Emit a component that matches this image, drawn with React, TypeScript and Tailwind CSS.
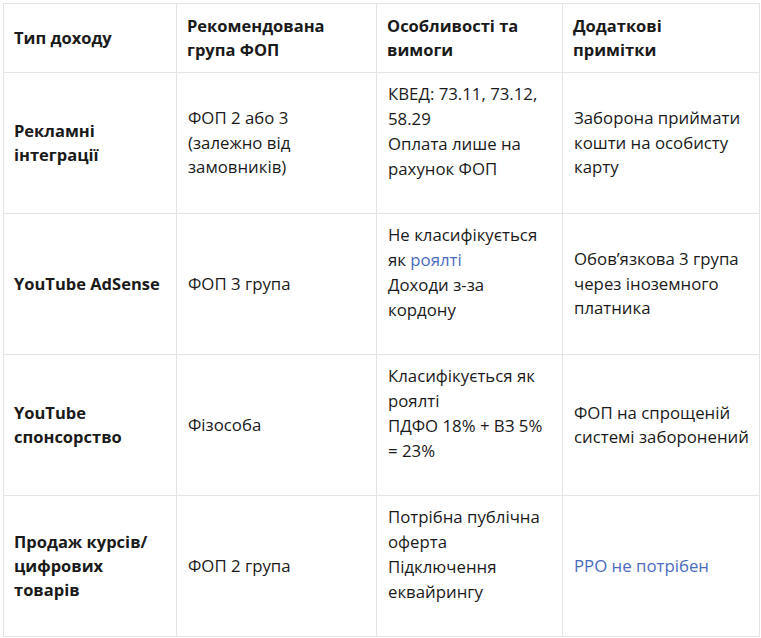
import React from 'react';

type Row = {
  type: string;
  group: string;
  features: React.ReactNode;
  notes: React.ReactNode;
};

const link = 'text-[#4a6cc0]';

const rows: Row[] = [
  {
    type: 'Рекламні інтеграції',
    group: 'ФОП 2 або 3 (залежно від замовників)',
    features: (
      <>
        КВЕД: 73.11, 73.12, 58.29
        <br />
        Оплата лише на рахунок ФОП
      </>
    ),
    notes: 'Заборона приймати кошти на особисту карту',
  },
  {
    type: 'YouTube AdSense',
    group: 'ФОП 3 група',
    features: (
      <>
        Не класифікується як <span className={link}>роялті</span>
        <br />
        Доходи з-за кордону
      </>
    ),
    notes: 'Обов’язкова 3 група через іноземного платника',
  },
  {
    type: 'YouTube спонсорство',
    group: 'Фізособа',
    features: (
      <>
        Класифікується як роялті
        <br />
        ПДФО 18% + ВЗ 5% = 23%
      </>
    ),
    notes: 'ФОП на спрощеній системі заборонений',
  },
  {
    type: 'Продаж курсів/ цифрових товарів',
    group: 'ФОП 2 група',
    features: (
      <>
        Потрібна публічна оферта
        <br />
        Підключення еквайрингу
      </>
    ),
    notes: <span className={link}>РРО не потрібен</span>,
  },
];

const headers: React.ReactNode[] = [
  'Тип доходу',
  <>Рекомендована<br />група ФОП</>,
  <>Особливості та<br />вимоги</>,
  <>Додаткові<br />примітки</>,
];

const App: React.FC = () => {
  return (
    <div className="bg-white min-h-screen p-[3px] font-['Open_Sans',sans-serif] text-[16.8px] text-[#1a1a1a]">
      <table className="w-[756px] table-fixed border-collapse">
        <colgroup>
          <col className="w-[173px]" />
          <col className="w-[200px]" />
          <col className="w-[186px]" />
          <col className="w-[197px]" />
        </colgroup>
        <thead>
          <tr className="h-[69px]">
            {headers.map((h, i) => (
              <th
                key={i}
                className="border border-[#e4e4e4] px-[10px] py-[10px] text-left align-middle text-[16.5px] font-bold leading-[24px]"
              >
                {h}
              </th>
            ))}
          </tr>
        </thead>
        <tbody>
          {rows.map((r) => (
            <tr key={r.type} className="h-[141px]">
              <td className="border border-[#e4e4e4] px-[10px] py-[6px] align-middle text-[16.5px] font-bold leading-[24px]">
                {r.type}
              </td>
              <td className="border border-[#e4e4e4] px-[11px] py-[6px] align-middle leading-[24.5px]">{r.group}</td>
              <td className="border border-[#e4e4e4] px-[11px] py-[6px] align-middle leading-[25px]">
                <div className="pb-[25px]">{r.features}</div>
              </td>
              <td className="border border-[#e4e4e4] pl-[11px] pr-[6px] py-[6px] align-middle leading-[24.5px]">
                {r.notes}
              </td>
            </tr>
          ))}
        </tbody>
      </table>
    </div>
  );
};

export default App;
